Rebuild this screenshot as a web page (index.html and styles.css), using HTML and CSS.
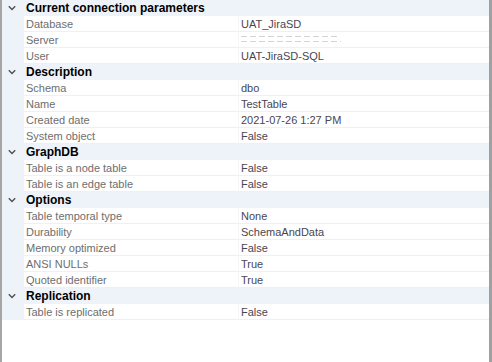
FILE: index.html
```html
<!DOCTYPE html>
<html>
<head>
<meta charset="utf-8">
<link rel="stylesheet" href="styles.css">
</head>
<body>
<div class="grid">
  <div class="cat"><span class="chev"><svg width="8" height="6" viewBox="0 0 8 6"><path d="M0.8 1.2 L4 4.4 L7.2 1.2" fill="none" stroke="#505050" stroke-width="1.4"/></svg></span><span class="cname">Current connection parameters</span></div>
  <div class="row"><span class="gut"></span><span class="name">Database</span><span class="val">UAT_JiraSD</span></div>
  <div class="row"><span class="gut"></span><span class="name">Server</span><span class="val"><span class="blur"><i class="b1"></i><i class="b2"></i></span></span></div>
  <div class="row"><span class="gut"></span><span class="name">User</span><span class="val">UAT-JiraSD-SQL</span></div>

  <div class="cat"><span class="chev"><svg width="8" height="6" viewBox="0 0 8 6"><path d="M0.8 1.2 L4 4.4 L7.2 1.2" fill="none" stroke="#505050" stroke-width="1.4"/></svg></span><span class="cname">Description</span></div>
  <div class="row"><span class="gut"></span><span class="name">Schema</span><span class="val">dbo</span></div>
  <div class="row"><span class="gut"></span><span class="name">Name</span><span class="val">TestTable</span></div>
  <div class="row"><span class="gut"></span><span class="name">Created date</span><span class="val">2021-07-26 1:27 PM</span></div>
  <div class="row"><span class="gut"></span><span class="name">System object</span><span class="val">False</span></div>

  <div class="cat"><span class="chev"><svg width="8" height="6" viewBox="0 0 8 6"><path d="M0.8 1.2 L4 4.4 L7.2 1.2" fill="none" stroke="#505050" stroke-width="1.4"/></svg></span><span class="cname">GraphDB</span></div>
  <div class="row"><span class="gut"></span><span class="name">Table is a node table</span><span class="val">False</span></div>
  <div class="row"><span class="gut"></span><span class="name">Table is an edge table</span><span class="val">False</span></div>

  <div class="cat"><span class="chev"><svg width="8" height="6" viewBox="0 0 8 6"><path d="M0.8 1.2 L4 4.4 L7.2 1.2" fill="none" stroke="#505050" stroke-width="1.4"/></svg></span><span class="cname">Options</span></div>
  <div class="row"><span class="gut"></span><span class="name">Table temporal type</span><span class="val">None</span></div>
  <div class="row"><span class="gut"></span><span class="name">Durability</span><span class="val">SchemaAndData</span></div>
  <div class="row"><span class="gut"></span><span class="name">Memory optimized</span><span class="val">False</span></div>
  <div class="row"><span class="gut"></span><span class="name">ANSI NULLs</span><span class="val">True</span></div>
  <div class="row"><span class="gut"></span><span class="name">Quoted identifier</span><span class="val">True</span></div>

  <div class="cat"><span class="chev"><svg width="8" height="6" viewBox="0 0 8 6"><path d="M0.8 1.2 L4 4.4 L7.2 1.2" fill="none" stroke="#505050" stroke-width="1.4"/></svg></span><span class="cname">Replication</span></div>
  <div class="row"><span class="gut"></span><span class="name">Table is replicated</span><span class="val">False</span></div>
</div>
</body>
</html>
```

FILE: styles.css
```css
html, body {
  margin: 0;
  padding: 0;
  background: #ffffff;
}
body {
  width: 492px;
  height: 362px;
  overflow: hidden;
  font-family: "Liberation Sans", Arial, sans-serif;
  font-size: 11px;
}
.grid {
  width: 487px;
  height: 362px;
  border-left: 2px solid #a6a6a6;
  border-right: 3px solid #a0a0a0;
  display: flex;
  flex-direction: column;
}
.cat {
  height: 16px;
  display: flex;
  align-items: center;
  background: #eef2f9;
  flex: none;
}
.chev {
  width: 24px;
  display: flex;
  justify-content: flex-start;
  padding-left: 6px;
  box-sizing: border-box;
  align-items: center;
}
.chev svg { display: block; }
.cname {
  font-weight: bold;
  font-size: 12px;
  color: #000;
  line-height: 16px;
}
.row {
  height: 16px;
  display: flex;
  flex: none;
}
.gut {
  width: 22px;
  background: #eef2f9;
  flex: none;
}
.name {
  width: 212px;
  padding-left: 2px;
  color: #6e6e6e;
  line-height: 16px;
  height: 15px;
  border-bottom: 1px solid #f0f0f0;
  flex: none;
}
.val {
  flex: 1;
  padding-left: 2px;
  color: #4a4650;
  line-height: 16px;
  height: 15px;
  border-bottom: 1px solid #f0f0f0;
  border-left: 1px solid #f6f6f6;
}
.blur {
  display: flex;
  flex-direction: column;
  gap: 4px;
  padding-top: 4px;
  width: 100px;
}
.blur i {
  display: block;
  height: 1px;
  background: repeating-linear-gradient(90deg, #d4d4d4 0 6px, transparent 6px 9px);
}
.blur .b1 { width: 96px; }
.blur .b2 { width: 100px; }
```
